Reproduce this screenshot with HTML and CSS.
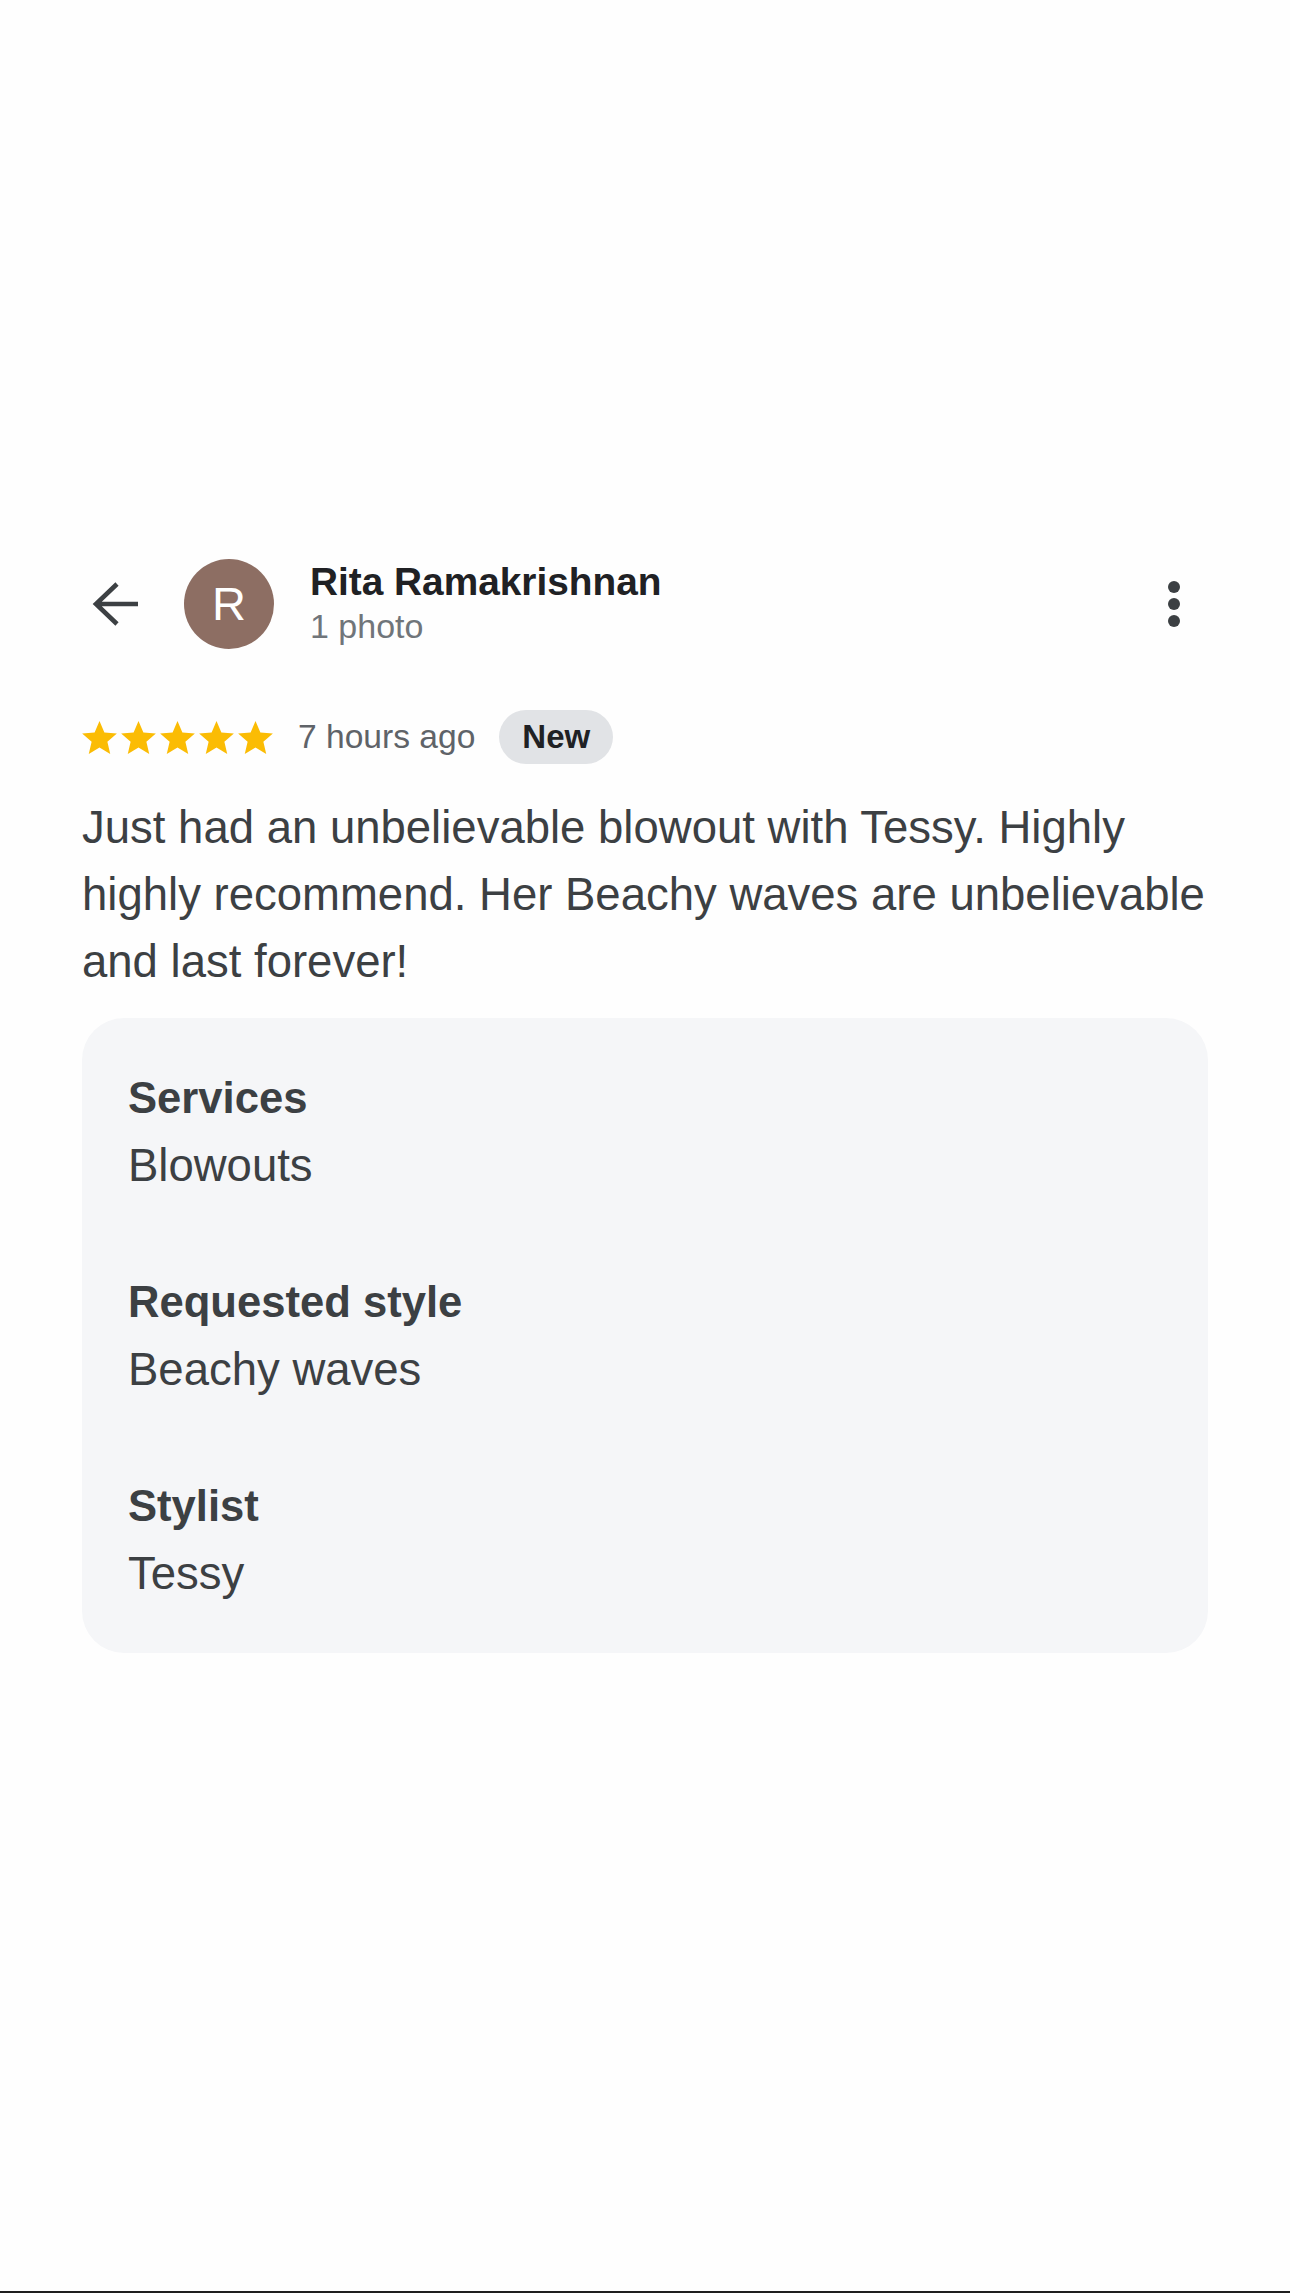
FILE: index.html
```html
<!DOCTYPE html>
<html lang="en">
<head>
<meta charset="utf-8">
<title>Review</title>
<link rel="stylesheet" href="styles.css">
</head>
<body>
<div class="page">
  <main class="review">
    <header class="head">
      <button class="back" aria-label="Back">
        <svg class="back-icon" viewBox="0 0 50 46" width="50" height="46">
          <path d="M46 23H5M25 3L4 23l21 20" fill="none" stroke="#3c4043" stroke-width="4.6" stroke-linecap="butt" stroke-linejoin="miter"/>
        </svg>
      </button>
      <div class="avatar">R</div>
      <div class="who">
        <div class="name">Rita Ramakrishnan</div>
        <div class="sub">1 photo</div>
      </div>
      <div class="more" aria-label="More">
        <span class="dot"></span><span class="dot"></span><span class="dot"></span>
      </div>
    </header>

    <div class="meta">
      <div class="stars">
        <svg class="star" viewBox="2 2 20 19"><path d="M12 17.27L18.18 21l-1.64-7.03L22 9.24l-7.19-.61L12 2 9.19 8.63 2 9.24l5.46 4.73L5.82 21z"/></svg>
        <svg class="star" viewBox="2 2 20 19"><path d="M12 17.27L18.18 21l-1.64-7.03L22 9.24l-7.19-.61L12 2 9.19 8.63 2 9.24l5.46 4.73L5.82 21z"/></svg>
        <svg class="star" viewBox="2 2 20 19"><path d="M12 17.27L18.18 21l-1.64-7.03L22 9.24l-7.19-.61L12 2 9.19 8.63 2 9.24l5.46 4.73L5.82 21z"/></svg>
        <svg class="star" viewBox="2 2 20 19"><path d="M12 17.27L18.18 21l-1.64-7.03L22 9.24l-7.19-.61L12 2 9.19 8.63 2 9.24l5.46 4.73L5.82 21z"/></svg>
        <svg class="star" viewBox="2 2 20 19"><path d="M12 17.27L18.18 21l-1.64-7.03L22 9.24l-7.19-.61L12 2 9.19 8.63 2 9.24l5.46 4.73L5.82 21z"/></svg>
      </div>
      <span class="time">7 hours ago</span>
      <span class="badge">New</span>
    </div>

    <p class="text">Just had an unbelievable blowout with Tessy. Highly highly recommend. Her Beachy waves are unbelievable and last forever!</p>

    <section class="details">
      <div class="group">
        <div class="label">Services</div>
        <div class="value">Blowouts</div>
      </div>
      <div class="group">
        <div class="label">Requested style</div>
        <div class="value">Beachy waves</div>
      </div>
      <div class="group">
        <div class="label">Stylist</div>
        <div class="value">Tessy</div>
      </div>
    </section>
  </main>
</div>
</body>
</html>
```

FILE: styles.css
```css
* { box-sizing: border-box; }

html, body {
  margin: 0;
  padding: 0;
  background: #fefefe;
}

body {
  font-family: "Liberation Sans", Arial, Helvetica, sans-serif;
  color: #3c4043;
}

.page {
  min-height: 2293px;
  border-bottom: 2px solid #1f1f1f;
  padding: 559px 82px 0;
}

.review {
  width: 1126px;
}

.head {
  display: flex;
  align-items: center;
  height: 90px;
}

.back {
  border: 0;
  background: none;
  padding: 0;
  margin: 0 0 0 10px;
  width: 50px;
  height: 46px;
  display: flex;
}

.back-icon {
  display: block;
}

.avatar {
  width: 90px;
  height: 90px;
  border-radius: 50%;
  background: #8d6e63;
  color: #fff;
  font-size: 47px;
  line-height: 90px;
  text-align: center;
  margin-left: 42px;
  flex: none;
}

.who {
  margin-left: 36px;
  flex: 1;
  display: flex;
  flex-direction: column;
}

.name {
  font-size: 38.8px;
  font-weight: bold;
  color: #202124;
  line-height: 44px;
}

.sub {
  font-size: 34px;
  color: #70757a;
  line-height: 44px;
}

.more {
  display: flex;
  flex-direction: column;
  gap: 5px;
  margin-right: 28px;
}

.dot {
  width: 12px;
  height: 12px;
  border-radius: 50%;
  background: #3c4043;
}

.meta {
  display: flex;
  align-items: center;
  height: 54px;
  margin-top: 61px;
}

.stars {
  display: flex;
  gap: 4px;
}

.star {
  width: 35px;
  height: 33px;
  fill: #fbbc04;
  display: block;
}

.time {
  margin-left: 25px;
  font-size: 33.6px;
  color: #5f6368;
}

.badge {
  margin-left: 24px;
  height: 54px;
  padding: 0 23px;
  border-radius: 27px;
  background: #e1e3e6;
  color: #202124;
  font-size: 33px;
  font-weight: bold;
  line-height: 54px;
}

.text {
  margin: 30px 0 0;
  font-size: 45.5px;
  line-height: 67px;
  color: #3c4043;
}

.details {
  margin-top: 23px;
  background: #f5f6f8;
  border-radius: 42px;
  padding: 46px 46px 45px;
  display: flex;
  flex-direction: column;
  gap: 68px;
}

.label {
  font-size: 43.6px;
  font-weight: bold;
  line-height: 68px;
  color: #3c4043;
}

.value {
  font-size: 45.5px;
  line-height: 68px;
  color: #3c4043;
}
```
